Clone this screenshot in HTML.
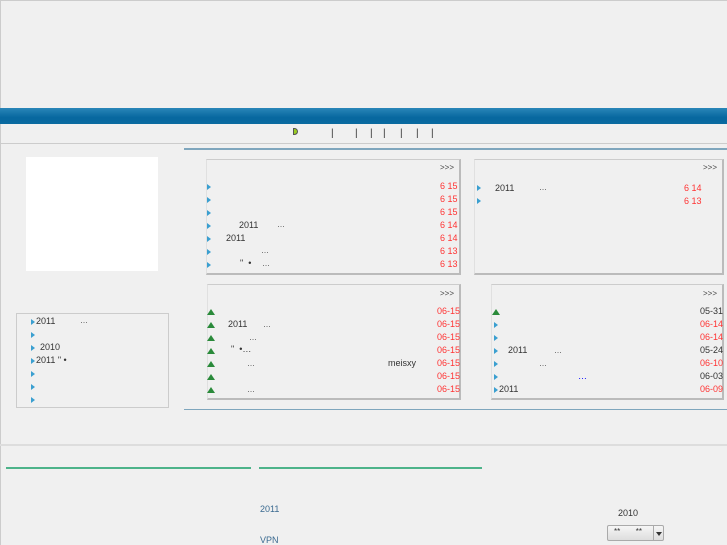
<!DOCTYPE html><html><head><meta charset="utf-8"><style>
body{margin:0;width:727px;height:545px;background:#f0f0f0;position:relative;overflow:hidden;font-family:"Liberation Sans","Noto Sans CJK SC",sans-serif;font-size:9px;color:#333}
.a{position:absolute}
.p{position:absolute;border-top:1px solid #ccc;border-left:1px solid #e0e0e0;border-right:2px solid #bbb;border-bottom:2px solid #bbb}
.t{position:absolute;width:0;height:0;border-left:4px solid #3a9fd0;border-top:3px solid transparent;border-bottom:3px solid transparent}
.g{position:absolute;width:0;height:0;border-left:4px solid transparent;border-right:4px solid transparent;border-bottom:6px solid #2a8a3a}
.r{color:#f33}
.m{font-size:8px;color:#444}
</style></head><body>
<div class="a" style="left:0;top:0;width:1px;height:545px;background:#ccc"></div>
<div class="a" style="left:0;top:0;width:727px;height:1px;background:#ccc"></div>
<div class="a" style="left:0;top:108px;width:727px;height:16px;background:linear-gradient(#2a86b8,#07679f 60%,#0a6aa0)"></div>
<div class="a" style="left:0;top:143px;width:727px;height:1px;background:#ccc"></div>
<div class="a" style="left:293px;top:128px;width:5px;height:7px;background:#9c2;border-radius:0 4px 4px 0;border:1px solid #555;box-sizing:border-box"></div>
<div class="a" style="left:331px;top:128px;font-size:10px">|</div><div class="a" style="left:355px;top:128px;font-size:10px">|</div><div class="a" style="left:370px;top:128px;font-size:10px">|</div><div class="a" style="left:383px;top:128px;font-size:10px">|</div><div class="a" style="left:400px;top:128px;font-size:10px">|</div><div class="a" style="left:416px;top:128px;font-size:10px">|</div><div class="a" style="left:431px;top:128px;font-size:10px">|</div>
<div class="a" style="left:184px;top:148px;width:543px;height:2px;background:#7fa6bd"></div>
<div class="a" style="left:26px;top:157px;width:132px;height:114px;background:#fff"></div>
<div class="a" style="left:16px;top:313px;width:151px;height:93px;border:1px solid #ccc"></div>
<div class="t" style="left:31px;top:319px"></div><div class="a" style="left:36px;top:316px">2011</div><div class="a m" style="left:80px;top:316px">…</div>
<div class="t" style="left:31px;top:332px"></div>
<div class="t" style="left:31px;top:345px"></div><div class="a" style="left:40px;top:342px">2010</div>
<div class="t" style="left:31px;top:358px"></div><div class="a" style="left:36px;top:355px">2011 " •</div>
<div class="t" style="left:31px;top:371px"></div><div class="t" style="left:31px;top:384px"></div><div class="t" style="left:31px;top:397px"></div>

<div class="p" style="left:206px;top:159px;width:252px;height:113px"></div>
<div class="a m" style="left:440px;top:163px">&gt;&gt;&gt;</div>
<div class="t" style="left:207px;top:184px"></div><div class="a r" style="left:440px;top:181px">6 15</div>
<div class="t" style="left:207px;top:197px"></div><div class="a r" style="left:440px;top:194px">6 15</div>
<div class="t" style="left:207px;top:210px"></div><div class="a r" style="left:440px;top:207px">6 15</div>
<div class="t" style="left:207px;top:223px"></div><div class="a" style="left:239px;top:220px">2011</div><div class="a m" style="left:277px;top:220px">…</div><div class="a r" style="left:440px;top:220px">6 14</div>
<div class="t" style="left:207px;top:236px"></div><div class="a" style="left:226px;top:233px">2011</div><div class="a r" style="left:440px;top:233px">6 14</div>
<div class="t" style="left:207px;top:249px"></div><div class="a m" style="left:261px;top:246px">…</div><div class="a r" style="left:440px;top:246px">6 13</div>
<div class="t" style="left:207px;top:262px"></div><div class="a" style="left:240px;top:258px">"&nbsp; •</div><div class="a m" style="left:262px;top:259px">…</div><div class="a r" style="left:440px;top:259px">6 13</div>

<div class="p" style="left:474px;top:159px;width:247px;height:113px"></div>
<div class="a m" style="left:703px;top:163px">&gt;&gt;&gt;</div>
<div class="t" style="left:477px;top:185px"></div><div class="a" style="left:495px;top:183px">2011</div><div class="a m" style="left:539px;top:183px">…</div><div class="a r" style="left:684px;top:183px">6 14</div>
<div class="t" style="left:477px;top:198px"></div><div class="a r" style="left:684px;top:196px">6 13</div>

<div class="p" style="left:207px;top:284px;width:251px;height:113px"></div>
<div class="a m" style="left:440px;top:289px">&gt;&gt;&gt;</div>
<div class="g" style="left:207px;top:309px"></div><div class="a r" style="left:437px;top:306px">06-15</div>
<div class="g" style="left:207px;top:322px"></div><div class="a" style="left:228px;top:319px">2011</div><div class="a m" style="left:263px;top:320px">…</div><div class="a r" style="left:437px;top:319px">06-15</div>
<div class="g" style="left:207px;top:335px"></div><div class="a m" style="left:249px;top:333px">…</div><div class="a r" style="left:437px;top:332px">06-15</div>
<div class="g" style="left:207px;top:348px"></div><div class="a" style="left:231px;top:344px">"&nbsp; •…</div><div class="a r" style="left:437px;top:345px">06-15</div>
<div class="g" style="left:207px;top:361px"></div><div class="a m r" style="left:247px;top:359px">…</div><div class="a" style="left:388px;top:358px">meisxy</div><div class="a r" style="left:437px;top:358px">06-15</div>
<div class="g" style="left:207px;top:374px"></div><div class="a r" style="left:437px;top:371px">06-15</div>
<div class="g" style="left:207px;top:387px"></div><div class="a m r" style="left:247px;top:385px">…</div><div class="a r" style="left:437px;top:384px">06-15</div>

<div class="p" style="left:491px;top:284px;width:230px;height:113px"></div>
<div class="a m" style="left:703px;top:289px">&gt;&gt;&gt;</div>
<div class="g" style="left:492px;top:309px"></div><div class="a" style="left:700px;top:306px">05-31</div>
<div class="t" style="left:494px;top:322px"></div><div class="a r" style="left:700px;top:319px">06-14</div>
<div class="t" style="left:494px;top:335px"></div><div class="a r" style="left:700px;top:332px">06-14</div>
<div class="t" style="left:494px;top:348px"></div><div class="a" style="left:508px;top:345px">2011</div><div class="a m" style="left:554px;top:346px">…</div><div class="a" style="left:700px;top:345px">05-24</div>
<div class="t" style="left:494px;top:361px"></div><div class="a m" style="left:539px;top:359px">…</div><div class="a r" style="left:700px;top:358px">06-10</div>
<div class="t" style="left:494px;top:374px"></div><div class="a" style="left:578px;top:371px;color:#00f">…</div><div class="a" style="left:700px;top:371px">06-03</div>
<div class="t" style="left:494px;top:387px"></div><div class="a" style="left:499px;top:384px">2011</div><div class="a r" style="left:700px;top:384px">06-09</div>

<div class="a" style="left:184px;top:409px;width:543px;height:1px;background:#7fa6bd"></div>
<div class="a" style="left:0;top:444px;width:727px;height:2px;background:#ddd"></div>
<div class="a" style="left:6px;top:467px;width:245px;height:2px;background:#4db38a"></div>
<div class="a" style="left:259px;top:467px;width:223px;height:2px;background:#4db38a"></div>
<div class="a" style="left:260px;top:504px;color:#3a6a90">2011</div>
<div class="a" style="left:260px;top:535px;color:#3a6a90">VPN</div>
<div class="a" style="left:618px;top:508px">2010</div>
<div class="a" style="left:607px;top:525px;width:57px;height:16px;border:1px solid #aaa;border-radius:2px;background:linear-gradient(#f6f6f6,#ddd);box-sizing:border-box"></div>
<div class="a" style="left:614px;top:527px;font-size:8px">**&nbsp;&nbsp;&nbsp;&nbsp;&nbsp;&nbsp;&nbsp;**</div>
<div class="a" style="left:653px;top:526px;width:1px;height:14px;background:#aaa"></div>
<div class="a" style="left:656px;top:532px;border-left:3px solid transparent;border-right:3px solid transparent;border-top:4px solid #333;width:0;height:0"></div>
</body></html>
